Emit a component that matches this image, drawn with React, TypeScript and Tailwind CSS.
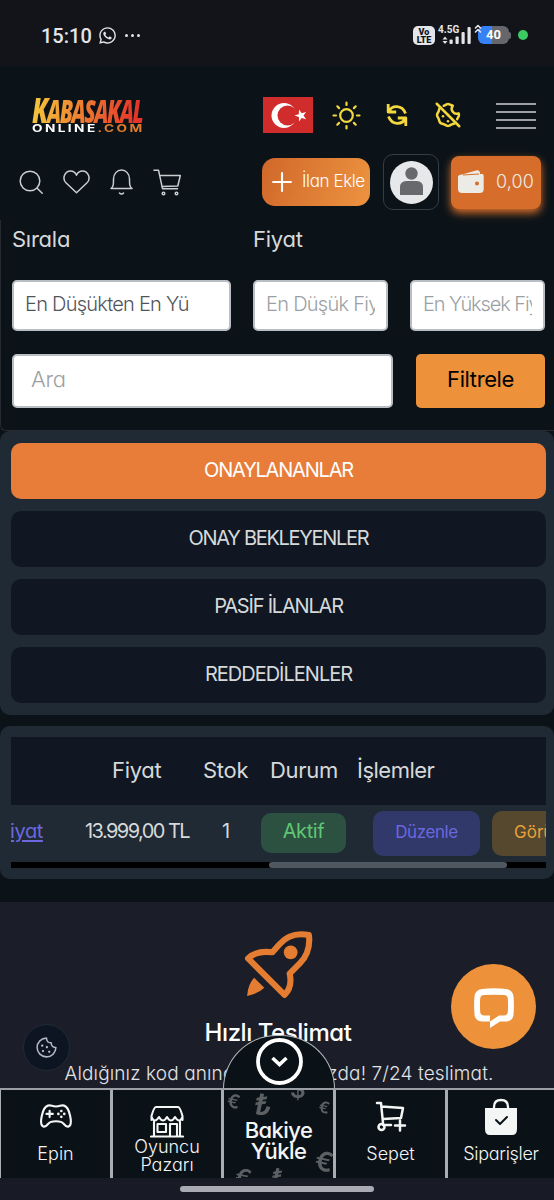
import React from "react";
import { FaWhatsapp } from "react-icons/fa";
import { TbCookieOff } from "react-icons/tb";
import { PiCookie } from "react-icons/pi";
import { IoGameControllerOutline } from "react-icons/io5";

const thin = { fill: "none", stroke: "currentColor", strokeLinecap: "round", strokeLinejoin: "round" } as const;

function StatusBar() {
  return (
    <div className="h-[66px] bg-[#121419] pl-[41px] pr-[26px] pt-[5px] flex items-center justify-between text-[#e4e5e9]">
      <div className="flex items-center">
        <span className="font-['Roboto',sans-serif] font-medium text-[20px] leading-6 w-[50px]">15:10</span>
        <FaWhatsapp className="ml-[7px] size-[19px]" />
        <span className="ml-[8px] flex gap-[3px]">
          <i className="size-[3px] rounded-full bg-current" />
          <i className="size-[3px] rounded-full bg-current" />
          <i className="size-[3px] rounded-full bg-current" />
        </span>
      </div>
      <div className="flex items-center font-['Roboto',sans-serif] font-bold -mt-px">
        <div className="w-[22px] h-[19px] rounded-[5px] bg-[#e4e5e9] text-[#121419] text-[9px] leading-[8px] font-black text-center pt-[2px]">
          <div>Vo</div>
          <div>LTE</div>
        </div>
        <div className="relative ml-[3px] w-[34px] h-[20px]">
          <span className="absolute left-0 top-0 text-[10px] leading-[9px]">4.5G</span>
          <svg className="absolute left-[4px] top-0" width="30" height="20" viewBox="0 0 30 20" fill="currentColor">
            <path d="M3 11.500l2.500 3h-5zM3 19l2.500-3h-5z" />
            <rect x="7.500" y="14.500" width="3.200" height="4.500" rx="1" />
            <rect x="13.500" y="11.500" width="3.200" height="7.500" rx="1" />
            <rect x="19.500" y="7" width="3.200" height="12" rx="1" />
            <rect x="25.500" y="2" width="3.200" height="17" rx="1" />
          </svg>
        </div>
        <div className="relative ml-[6px] w-[33px] h-[18px] flex items-center">
          <div className="w-[31px] h-[18px] rounded-[6px] bg-[linear-gradient(90deg,#3581f5_45%,#66676d_45%)] text-white text-[13px] leading-[18px] text-center">40</div>
          <i className="w-[2px] h-[7px] rounded-r-full bg-[#66676d]" />
          <svg className="absolute -left-[4px] -top-[2px]" width="8" height="9" viewBox="0 0 8 9" {...thin} strokeWidth="1.600">
            <path d="M1.500 4L4 1.500 6.500 4M1.500 8L4 5.500 6.500 8" />
          </svg>
        </div>
        <i className="ml-[7px] size-[10px] rounded-full bg-[#3cca62]" />
      </div>
    </div>
  );
}

function Logo() {
  return (
    <div className="w-[114px] h-[38px]">
      <div className="h-[28px] w-[168px] origin-left scale-x-[0.68] bg-[linear-gradient(100deg,#f3c13c_5%,#ee7a30_45%,#e5352a_90%)] bg-clip-text text-transparent font-['Open_Sans',sans-serif] font-extrabold italic text-[31px] leading-[28px] tracking-[-2.200px] whitespace-nowrap">
        <span className="text-[36px]">K</span>ABASAKAL
      </div>
      <div className="origin-left scale-x-[1.300] w-[88px] h-[9px] font-['Inter',sans-serif] font-bold text-[10.500px] leading-[9px] tracking-[1.850px] text-white whitespace-nowrap">
        ONLINE<span className="text-[#e07c2c]">.COM</span>
      </div>
    </div>
  );
}

function TopRow() {
  return (
    <div className="h-[50px] flex items-center pl-[32px] pr-[18px]">
      <Logo />
      <svg className="ml-[117px]" width="50" height="36" viewBox="0 0 50 36">
        <rect width="50" height="36" fill="#d02c2c" />
        <circle cx="21" cy="18.500" r="12.500" fill="#fff" />
        <circle cx="24.500" cy="18.500" r="10" fill="#d02c2c" />
        <path d="M31.500 18.500l4.300-1.300.2-4.700 2.700 3.700 4.400-1.300-2.600 3.700 2.600 3.700-4.400-1.400-2.700 3.700-.1-4.600z" fill="#fff" />
      </svg>
      <svg className="ml-[19px] text-[#f4d73c]" width="29" height="29" viewBox="0 0 29 29" {...thin} strokeWidth="2.200">
        <circle cx="14.500" cy="14.500" r="6.300" />
        <path d="M14.500 1.500v2.500M14.500 25v2.500M1.500 14.500h2.500M25 14.500h2.500M5.300 5.300l1.800 1.800M21.900 21.900l1.800 1.800M5.300 23.700l1.800-1.800M21.900 7.100l1.800-1.800" />
      </svg>
      <svg className="ml-[25px] text-[#f4d73c]" width="22" height="24" viewBox="0 0 22 24" {...thin} strokeWidth="2.800" strokeLinecap="butt">
        <path d="M2.200 1v8h8M2.500 8.500C6 2 16 1.500 19.500 10.500M19.800 23v-8h-8M19.500 15.500C16 22 6 22.500 2.500 13.500" />
        <path d="M1.500 5v4.500h6zM20.500 19v-4.500h-6z" fill="currentColor" strokeWidth="1" />
      </svg>
      <TbCookieOff className="ml-[25px] size-[30px] text-[#f4d73c]" />
      <div className="ml-auto w-[40px] flex flex-col gap-[6px] mt-[1px]">
        <i className="h-[2px] bg-[#9da1a6]" /><i className="h-[2px] bg-[#9da1a6]" /><i className="h-[2px] bg-[#9da1a6]" /><i className="h-[2px] bg-[#9da1a6]" />
      </div>
    </div>
  );
}

function ActionRow() {
  return (
    <div className="h-[60px] mt-[12px] flex items-center pl-[19px] pr-[13px] text-[#c9ced0]">
      <svg width="24" height="24" viewBox="0 0 24 24" {...thin} strokeWidth="1.500">
        <circle cx="11" cy="11" r="9.800" /><path d="M18.200 18.200l5 5" />
      </svg>
      <svg className="ml-[20px]" width="27" height="24" viewBox="0 0 27 24" {...thin} strokeWidth="1.500">
        <path d="M13.500 22.700L3.200 13C-1.500 8.500 2 1 7.500 1c3 0 5 1.800 6 4.200C14.500 2.800 16.500 1 19.500 1 25 1 28.500 8.500 23.800 13z" />
      </svg>
      <svg className="ml-[20px]" width="23" height="26" viewBox="0 0 23 26" {...thin} strokeWidth="1.500">
        <path d="M1 19.500c2.500-2 2.500-4 2.500-9.500 0-5 3.500-9 8-9s8 4 8 9c0 5.500 0 7.500 2.500 9.500zM9.500 24c1 1.200 3 1.200 4 0" />
      </svg>
      <svg className="ml-[20px]" width="29" height="27" viewBox="0 0 29 27" {...thin} strokeWidth="1.500">
        <path d="M1 1.200h4.500l4 18.500h15M6.800 6.500h20.500l-2.500 10.500-16 .5" /><circle cx="10.500" cy="24.500" r="1.300" /><circle cx="23.500" cy="24.500" r="1.300" />
      </svg>
      <button className="ml-[80px] w-[108px] h-[48px] shrink-0 rounded-[13px] bg-[linear-gradient(110deg,#d0672a,#ed9440)] flex items-center pl-[10px] text-white">
        <svg width="20" height="20" viewBox="0 0 19 19" {...thin} strokeWidth="2"><path d="M9.500 1v17M1 9.500h17" /></svg>
        <span className="ml-[10px] mb-[3px] text-[17px] leading-5 tracking-[-0.400px] whitespace-nowrap font-light">İlan Ekle</span>
      </button>
      <div className="ml-[13px] w-[56px] h-[56px] shrink-0 rounded-[10px] border border-[#353c43] flex items-center justify-center">
        <svg width="43" height="43" viewBox="0 0 43 43">
          <circle cx="21.500" cy="21.500" r="21.500" fill="#e7e8ea" />
          <circle cx="21.500" cy="12.500" r="6.200" fill="#68696c" />
          <path d="M10 34v-7.500q0-6.500 6.500-6.500h10q6.500 0 6.500 6.500V34z" fill="#68696c" />
        </svg>
      </div>
      <div className="ml-[12px] mt-px w-[90px] h-[53px] shrink-0 rounded-[8px] bg-[#d76d2a] shadow-[0_4px_8px_#d76d2a] flex items-center pl-[7px] pb-[2px]">
        <svg width="26" height="23" viewBox="0 0 26 23">
          <path d="M4 4.500L19 .3q2-.5 3 2V4H25q.7 1 .7 3v12q0 4-4 4H4q-4 0-4-4V7q0-2.500 4-2.500z" fill="#ecebe5" />
          <path d="M5 5l16-1" stroke="#d76d2a" strokeWidth="1" /><circle cx="19" cy="13.500" r="2" fill="#d76d2a" />
        </svg>
        <span className="ml-[12px] text-[18px] leading-5 tracking-[0.100px] text-[#ecebe5] font-light">0,00</span>
      </div>
    </div>
  );
}

function Field({ className, children }: { className: string; children: React.ReactNode }) {
  return (
    <div className={"shrink-0 rounded-[5px] border-2 border-[#b9bec4] bg-white overflow-hidden whitespace-nowrap text-[#9b9fa4] font-light " + className}>
      <div className="overflow-hidden">{children}</div>
    </div>
  );
}

function Filters() {
  return (
    <section className="h-[211px] border-l border-b border-[#262a30] rounded-bl-[6px] bg-[#0c1318] pl-[11px]">
      <div className="flex h-[60px] pt-[5px] text-[22px] leading-7 text-[#d6d9da] tracking-[-0.250px]">
        <div className="w-[241px]">Sırala</div>
        <div>Fiyat</div>
      </div>
      <div className="flex">
        <Field className="w-[219px] h-[51px] px-[11px] py-[8px] text-[20px] leading-7 tracking-[-0.750px] text-[#505459]!">En Düşükten En Yü</Field>
        <Field className="ml-[22px] w-[135px] h-[51px] px-[11px] py-[8px] text-[20px] leading-7 tracking-[-0.720px]">En Düşük Fiyat</Field>
        <Field className="ml-[22px] w-[135px] h-[51px] px-[11px] py-[8px] text-[20px] leading-7 tracking-[-1.100px]">En Yüksek Fiyat</Field>
      </div>
      <div className="flex mt-[23px]">
        <Field className="w-[381px] h-[54px] px-[17px] py-[9px] text-[22px] leading-7 tracking-[-0.300px]">Ara</Field>
        <button className="ml-[23px] w-[129px] h-[54px] rounded-[5px] bg-[#ed913a] text-black text-[22px] tracking-[-0.400px] leading-7 pb-[4px]">Filtrele</button>
      </div>
    </section>
  );
}

const tabs = [
  { label: "ONAYLANANLAR", cls: "bg-[#e87c39] text-white tracking-[-1.200px]" },
  { label: "ONAY BEKLEYENLER", cls: "bg-[#101723] text-[#d6d9da] tracking-[-1.300px]" },
  { label: "PASİF İLANLAR", cls: "bg-[#101723] text-[#d6d9da] tracking-[-1.200px]" },
  { label: "REDDEDİLENLER", cls: "bg-[#101723] text-[#d6d9da] tracking-[-1.000px]" },
];

function Tabs() {
  return (
    <section className="h-[284px] rounded-[10px] bg-[#202a35] pt-[12px] pl-[11px] pr-[8px] flex flex-col gap-[12px]">
      {tabs.map((t) => (
        <button key={t.label} className={"h-[56px] shrink-0 rounded-[10px] text-[20px] leading-6 pb-[2px] " + t.cls}>{t.label}</button>
      ))}
    </section>
  );
}

function Listing() {
  return (
    <section className="mt-[11px] h-[153px] rounded-[10px] bg-[#202a35] pt-[11px] pl-[11px] pr-[8px]">
      <div className="w-[535px] overflow-hidden">
        <div className="h-[68px] w-[620px] bg-[#101723] flex items-center text-[22px] leading-7 tracking-[-0.300px] text-[#d6d9da] pb-[2px]">
          <span className="w-[91px] ml-[101px]">Fiyat</span>
          <span className="w-[67px]">Stok</span>
          <span className="w-[87px]">Durum</span>
          <span className="tracking-[-0.500px]">İşlemler</span>
        </div>
        <div className="h-[57px] w-[620px] flex items-center text-[20px] leading-6 text-[#d6d9da]">
          <span className="w-[75px] -ml-[1px] mb-[5px] text-[#6c67de] underline underline-offset-2 tracking-[-0.400px]">iyat</span>
          <span className="w-[137px] mb-[5px] tracking-[-1.550px]">13.999,00 TL</span>
          <span className="w-[39px] mb-[5px]">1</span>
          <span className="w-[85px] h-[40px] mt-[-1px] rounded-[10px] bg-[#2c5140] text-[#5fc774] leading-[37px] text-center tracking-[-0.400px]">Aktif</span>
          <span className="ml-[27px] w-[107px] h-[45px] mt-[-1px] rounded-[10px] bg-[#31386a] text-[#6c67de] text-[17px] leading-[42px] text-center tracking-[-0.400px]">Düzenle</span>
          <span className="ml-[12px] w-[107px] h-[45px] mt-[-1px] rounded-[10px] bg-[#56472f] text-[#e6a03a] text-[17px] leading-[42px] pl-[22px]">Görüntüle</span>
        </div>
        <div className="h-[6px] bg-black pl-[258px]"><div className="w-[238px] h-[6px] rounded-full bg-[#4f5761]" /></div>
      </div>
    </section>
  );
}

function Features() {
  return (
    <section className="mt-[23px] h-[298px] bg-[#1b1e28] flex flex-col items-center text-white">
      <svg className="mt-[28px] ml-[3px] text-[#e47d31] shrink-0" width="69" height="71" viewBox="0 0 68 70" {...thin} strokeWidth="6">
        <path d="M64 5C54 3 43 5 35 14L28 22Q12 20 4 28L40 64Q48 56 45 43L55 33Q66 22 64 5z" />
        <circle cx="46" cy="22" r="6.800" fill="currentColor" stroke="none" />
        <path d="M10 47L20 57Q14 63 3 65Q4 53 10 47z" fill="currentColor" stroke="none" />
      </svg>
      <h2 className="mt-[16px] ml-[2px] text-[24px] leading-8 font-medium tracking-[-0.450px]">Hızlı Teslimat</h2>
      <p className="mt-[11px] ml-[4px] text-[19px] leading-7 font-light whitespace-nowrap tracking-[0.120px] text-[#e2e3e6]">Aldığınız kod anında hesabınızda! 7/24 teslimat.</p>
    </section>
  );
}

function Store() {
  return (
    <svg width="34" height="33" viewBox="0 0 34 33" {...thin} strokeWidth="2.100">
      <path d="M6 2h22q2 0 4.500 9v4M1.500 15v-4Q4 2 6 2M1.500 12q3 7 7.500 0 4 7 8 0 4 7 8 0 4.500 7 7.500 0M4 17v14M30 17v14M1 31.500h32M7.500 19h8.500v8H7.500zM20 31V19h7v12" />
    </svg>
  );
}

function BottomNav() {
  const cell = "h-[88px] shrink-0 border-r-[3px] border-[#a9adb2] bg-[#0a1217] flex flex-col items-center";
  return (
    <nav className="absolute left-0 top-[1088px] w-[554px] h-[112px] bg-[#181b25] text-[#f4f5f5]">
      <div className="flex h-[90px] border-t-2 border-[#9b9fa5] text-[18px] leading-[18px] font-light text-center">
        <div className={cell + " w-[113px] border-l"}>
          <IoGameControllerOutline className="mt-[9px] size-[34px]" />
          <span className="mt-[12px]">Epin</span>
        </div>
        <div className={cell + " w-[111px]"}>
          <div className="mt-[15px]"><Store /></div>
          <span>Oyuncu<br />Pazarı</span>
        </div>
        <div className={cell + " w-[112px] relative overflow-hidden"}>
          <div className="absolute inset-0 text-[#5c6063] font-semibold text-[24px] blur-[0.600px]">
            <span className="absolute left-[3px] top-[3px] rotate-12 text-[19px]">€</span>
            <span className="absolute left-[30px] top-[6px] rotate-12 text-[29px]">₺</span>
            <span className="absolute left-[66px] -top-[9px]">$</span>
            <span className="absolute right-[3px] top-[8px] rotate-12 text-[16px]">€</span>
            <span className="absolute left-[11px] top-[79px] rotate-12">€</span>
            <span className="absolute left-[47px] top-[79px] rotate-12">₺</span>
            <span className="absolute right-0 top-[63px] rotate-12 text-[27px]">€</span>
          </div>
          <span className="relative mt-[30px] text-[22px] leading-[21px] font-medium tracking-[-0.600px]">Bakiye<br />Yükle</span>
        </div>
        <div className={cell + " w-[112px]"}>
          <svg className="mt-[10px]" width="32" height="34" viewBox="0 0 32 34" {...thin} strokeWidth="2.500">
            <path d="M2 3h4l2 20M6.500 6.500L28 8l-2 10L8 19M8 25h8M25 20.500v10M20 25.500h10" /><circle cx="6.500" cy="27" r="3" />
          </svg>
          <span className="mt-[11px]">Sepet</span>
        </div>
        <div className="w-[106px] shrink-0 h-[88px] bg-[#0a1217] flex flex-col items-center">
          <svg className="mt-[8px]" width="32" height="38" viewBox="0 0 32 38" {...thin}>
            <path d="M0 10h32v21q0 6-5 6H5q-5 0-5-6z" fill="currentColor" stroke="none" />
            <path d="M9 11V9q0-7 7-7t7 7v2" strokeWidth="2.300" /><path d="M11 22l4 4 7-7" stroke="#0a1217" strokeWidth="2" />
          </svg>
          <span className="mt-[9px] tracking-[-0.300px]">Siparişler</span>
        </div>
      </div>
      <div className="mx-auto mt-[8px] w-[194px] h-[6px] rounded-full bg-[#aaaab5]" />
    </nav>
  );
}

export default function App() {
  return (
    <main className="relative w-[554px] h-[1200px] overflow-hidden bg-[#0b1318] font-['Inter',sans-serif] [font-feature-settings:'cv11']">
      <StatusBar />
      <header className="h-[154px] pt-[24px]">
        <TopRow />
        <ActionRow />
      </header>
      <Filters />
      <Tabs />
      <Listing />
      <Features />
      <div className="absolute left-[451px] top-[964px] size-[85px] rounded-full bg-[#ed913a] flex items-center justify-center text-white">
        <svg width="42" height="42" viewBox="0 0 42 42">
          <path fillRule="evenodd" fill="currentColor" d="M9 3Q21 1.500 33 3q7 1 7.500 7.500.8 9 0 18Q40 35 33 35.500H27L17 42V29.500H11q-3.500-.3-3.800-3.500-.5-6.500 0-13.500.3-3.200 3.800-3.500 10-.7 20 0 3.500.3 3.800 3.500.5 7 0 13.500-.3 3.200-3.800 3.500H26L17 35.500H9Q2 35 1.500 28.500q-.8-9 0-18Q2 4 9 3z" />
        </svg>
      </div>
      <div className="absolute left-[23px] top-[1024px] size-[47px] rounded-full border border-[#202a38] bg-[#0d1522] flex items-center justify-center text-[#b4b8c0]">
        <PiCookie className="size-[25px]" />
      </div>
      <div className="absolute left-[223px] top-[1035px] w-[112px] h-[54px] rounded-t-full border border-b-0 border-[#b4b8bb] bg-[#0a1217] flex justify-center">
        <svg className="mt-[2px]" width="47" height="47" viewBox="0 0 47 47" fill="none" stroke="#fff">
          <circle cx="23.500" cy="23.500" r="21.500" strokeWidth="3.800" /><path d="M16.500 20l7 6.500 7-6.500" strokeWidth="3.600" />
        </svg>
      </div>
      <BottomNav />
    </main>
  );
}
